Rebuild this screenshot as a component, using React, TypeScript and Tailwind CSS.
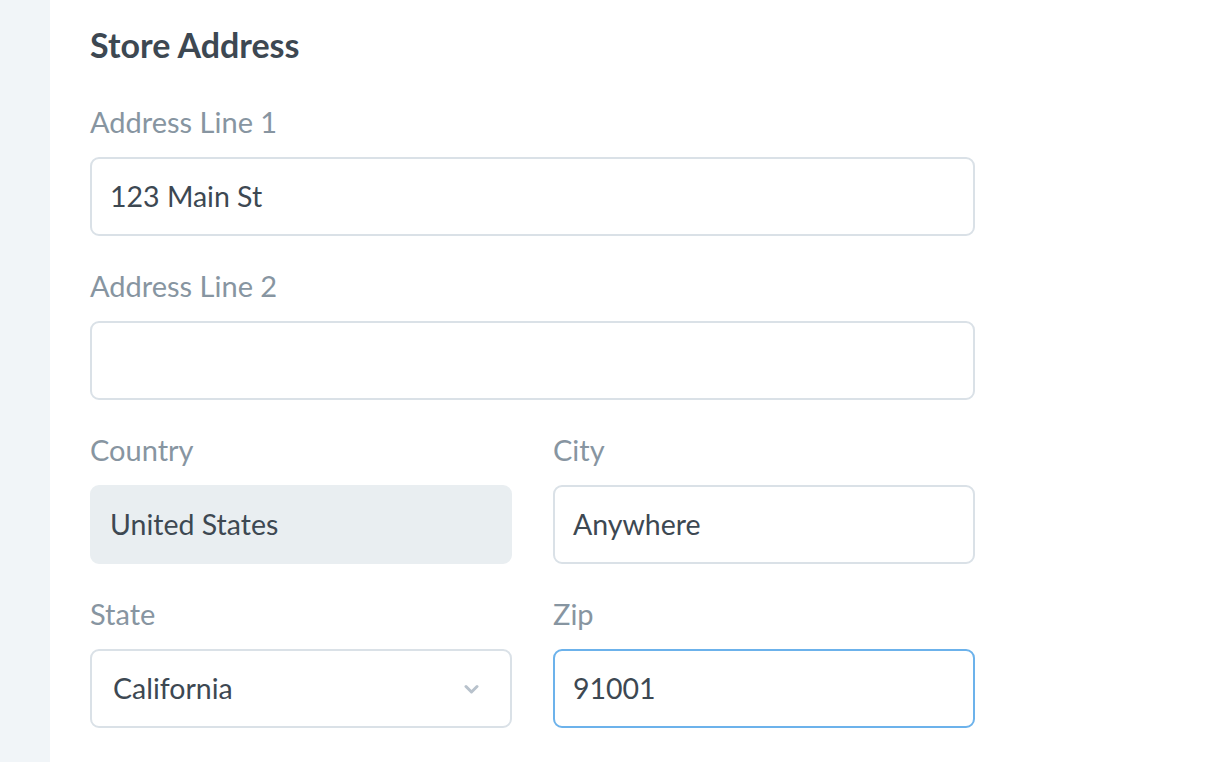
import React from "react";

const font = { fontFamily: "Lato, 'Noto Sans', sans-serif" };

function Label({ children }: { children: React.ReactNode }) {
    return <div className="h-[52px] text-[29px] leading-[34px] text-[#8795a1]">{children}</div>;
}

function Field({ value = "", className = "" }: { value?: string; className?: string }) {
    return (
        <div
            className={`h-[79px] rounded-[9px] border-2 px-[18px] flex items-center text-[28.5px] text-[#3d4852] ${className}`}
        >
            {value}
        </div>
    );
}

export default function App() {
    return (
        <div className="flex w-[1208px] h-[762px] overflow-hidden bg-white" style={font}>
            <div className="w-[50px] shrink-0 bg-[#f1f5f8]" />
            <div className="pl-[40px] w-[925px]">
                <h2 className="pt-[25px] h-[105px] text-[34px] leading-[40px] font-bold text-[#3d4852]">Store Address</h2>
                <div className="flex flex-col gap-y-[33px]">
                    <div>
                        <Label>Address Line 1</Label>
                        <Field value="123 Main St" className="border-[#dae1e7]" />
                    </div>
                    <div>
                        <Label>Address Line 2</Label>
                        <Field className="border-[#dae1e7]" />
                    </div>
                    <div className="grid grid-cols-2 gap-x-[41px] gap-y-[33px]">
                        <div>
                            <Label>Country</Label>
                            <Field value="United States" className="border-[#e9eef1] bg-[#e9eef1]" />
                        </div>
                        <div>
                            <Label>City</Label>
                            <Field value="Anywhere" className="border-[#dae1e7]" />
                        </div>
                        <div>
                            <Label>State</Label>
                            <div className="h-[79px] rounded-[9px] border-2 border-[#dae1e7] pl-[21px] pr-[31px] flex items-center justify-between text-[28.5px] text-[#3d4852]">
                                <span>California</span>
                                <svg width="15" height="11" viewBox="0 0 15 11" fill="none" className="shrink-0 mt-[2px]">
                                    <path d="M2 2.5L7.5 8L13 2.5" stroke="#b8c2cc" strokeWidth="3" strokeLinecap="round" strokeLinejoin="round" />
                                </svg>
                            </div>
                        </div>
                        <div>
                            <Label>Zip</Label>
                            <Field value="91001" className="border-[#6cb2eb]" />
                        </div>
                    </div>
                </div>
            </div>
        </div>
    );
}
